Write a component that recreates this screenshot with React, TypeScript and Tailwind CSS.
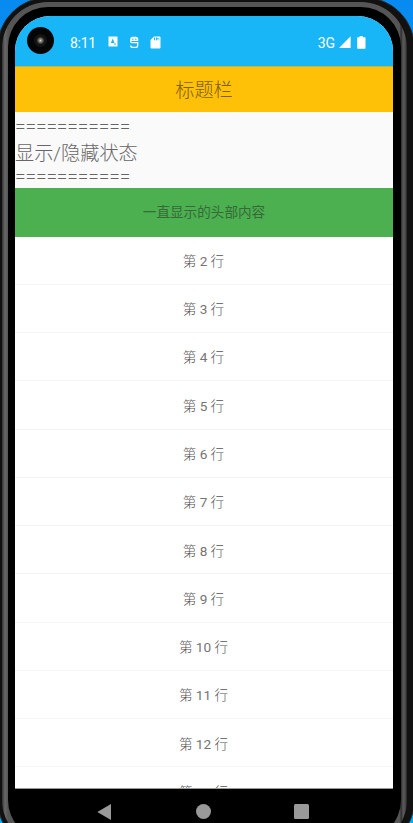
const rows = [2, 3, 4, 5, 6, 7, 8, 9, 10, 11, 12, 13];

function StatusBar() {
  return (
    <div className="relative h-[50px] shrink-0 bg-[#18b5f7] text-white">
      <div className="absolute left-[12px] top-[11px] flex h-[27px] w-[27px] items-center justify-center rounded-full bg-[#050505]">
        <div className="flex h-[13px] w-[13px] items-center justify-center rounded-full bg-[#141414]">
          <div className="h-[7px] w-[7px] rounded-full bg-[radial-gradient(circle,#d8d3c0_0%,#77746c_35%,#202020_80%)]" />
        </div>
      </div>
      <div className="flex h-full items-center pl-[55px] pr-[27px] pt-[3px]">
        <span className="w-[38px] text-[14px] leading-4 tracking-[-0.3px]">8:11</span>
        <svg className="-mt-[2px] block" width="10" height="11" viewBox="0 0 10 11">
          <path d="M.5.5h9v10h-9z" fill="#fff" />
          <path d="m2.8 7 2-4.4L6.5 7Z" fill="#18b5f7" />
          <path d="M6 8h2" stroke="#18b5f7" strokeWidth="1.2" />
        </svg>
        <svg className="-mt-px ml-[11px] block" width="11" height="13" viewBox="0 0 11 13">
          <path d="M1.2 5V3.4Q1.2.8 3.8.8h3Q9.3.8 9.3 3.4V5H1.2Z" fill="#fff" />
          <path d="M3 3.2h1.5M6 3.2h1.5" stroke="#18b5f7" strokeWidth="1" />
          <path d="M1.7 4v1.2q0 1.5 1.5 1.5h5.5v2.5q0 2.2-2.2 2.2H4q-2.3 0-2.3-2" fill="none" stroke="#fff" strokeWidth="1.3" />
        </svg>
        <svg className="-mt-px ml-[10px] block" width="11" height="13" viewBox="0 0 11 13">
          <path d="M4 .5h5.5q1 0 1 1v10q0 1-1 1h-8q-1 0-1-1V4Z" fill="#fff" />
          <path d="M4.5 1.5v2.8M6.5 1.5v2.8M6.5 2.9h3" stroke="#18b5f7" strokeWidth="1" />
        </svg>
        <span className="ml-auto text-[14px] leading-4 tracking-[-0.1px]">3G</span>
        <svg className="-mt-px ml-[4px] block" width="12" height="12" viewBox="0 0 12 12">
          <path d="M0 12 11.6.3V12Z" fill="#fff" />
        </svg>
        <svg className="-mt-px ml-[6px] block" width="9" height="13" viewBox="0 0 9 13">
          <path d="M2.6 0h3.2v1.2H8q.5 0 .5.5v10.4q0 .6-.6.6H.8q-.6 0-.6-.6V1.7q0-.5.5-.5h1.9Z" fill="#fff" />
        </svg>
      </div>
    </div>
  );
}

function NavigationBar() {
  return (
    <div className="flex h-[45px] items-center pl-[82px] text-[#999]">
      <svg className="block" width="15" height="18" viewBox="0 0 15 18" fill="currentColor">
        <path d="M14 1v16L.3 9Z" />
      </svg>
      <div className="ml-[84px] h-[15px] w-[15px] rounded-full bg-current" />
      <div className="ml-[83px] h-[15px] w-[15px] rounded-[1.5px] bg-current" />
    </div>
  );
}

export default function App() {
  return (
    <div className="flex h-[823px] w-[413px] items-start overflow-hidden bg-[linear-gradient(180deg,#078bf0,#00adfa)] font-['Roboto','Noto_Sans_CJK_SC',sans-serif]">
      <div className="-ml-[3px] -mt-[3px] h-[854px] w-[418px] shrink-0 rounded-[51px] border border-[#2c2c2c] bg-[#111] pb-[4px] pl-[4px] pr-[7px] pt-[4px]">
        <div className="h-full rounded-[46px] bg-[linear-gradient(90deg,#343434_0px,#686868_3px,#555_6px,#555_398px,#2a2a2a_399px,#595959_401px,#505050_403px,#242424_405px)] p-[6px] pt-[5px]">
          <div className="h-full rounded-[40px] bg-black pl-[7px] pr-[8px] pt-[9px]">
            <div className="flex h-[773px] w-[378px] flex-col overflow-hidden rounded-t-[35px] border-b border-[#999] bg-white">
              <StatusBar />
              <div className="flex h-[46px] shrink-0 items-center justify-center border-t border-[#b4b84d] bg-[#ffc107] pt-[4px] text-[19.2px] font-light text-[#7f6010]">
                标题栏
              </div>
              <div className="h-[76px] shrink-0 bg-[#fafafa] pt-[2px] text-[19.2px] font-light leading-[25px] text-[#666]">
                <div className="h-[25px] tracking-[-0.15px]">===========</div>
                <div className="h-[25px] pt-[2px]">显示/隐藏状态</div>
                <div className="h-[25px] tracking-[-0.15px]">===========</div>
              </div>
              <div className="flex h-[48.5px] shrink-0 items-center justify-center bg-[#4caf50] text-[13.6px] text-[#366b38]">
                一直显示的头部内容
              </div>
              {rows.map((row) => (
                <div
                  key={row}
                  className="flex h-[48.27px] shrink-0 items-center justify-center border-b border-[#f5f5f5] pt-[2px] text-[13.6px] font-light text-[#555]"
                >
                  <span className="-ml-px">
                    第 <span className="font-normal text-[#757575]">{row}</span> 行
                  </span>
                </div>
              ))}
            </div>
            <NavigationBar />
          </div>
        </div>
      </div>
    </div>
  );
}
